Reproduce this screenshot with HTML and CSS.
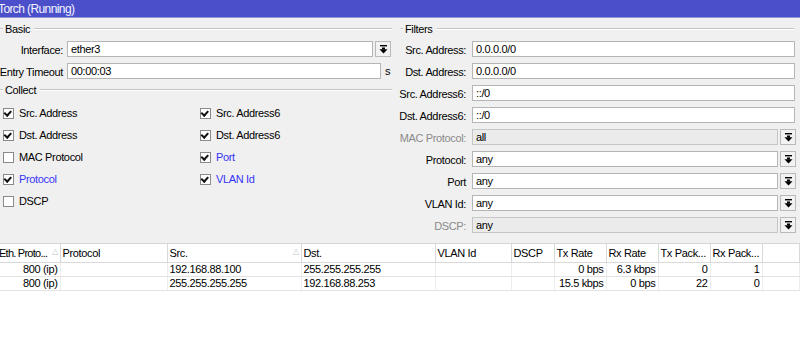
FILE: index.html
```html
<!DOCTYPE html>
<html lang="en">
<head>
  <meta charset="UTF-8" />
  <title>Torch (Running)</title>
  <link rel="stylesheet" href="styles.css">
</head>
<body>
  <div class="window">
    <div class="titlebar">Torch (Running)</div>

    <div class="panels">
      <!-- Left: Basic + Collect -->
      <div class="panel panel-left">
        <div class="group-title"><span class="dash"></span><span class="group-name">Basic</span><span class="rule"></span></div>

        <div class="field">
          <label class="field-label">Interface:</label>
          <div class="input input-drop">ether3</div>
          <button class="drop-btn"><svg width="9" height="9" viewBox="0 0 9 9"><rect x="1" y="0" width="7" height="1.4" fill="#000"/><rect x="3" y="2.5" width="3" height="2" fill="#000"/><polygon points="0.5,4.2 8.5,4.2 4.5,8.4" fill="#000"/></svg></button>
        </div>
        <div class="field field-last">
          <label class="field-label">Entry Timeout</label>
          <div class="input input-timeout">00:00:03</div>
          <span class="unit">s</span>
        </div>

        <div class="group-title"><span class="dash"></span><span class="group-name">Collect</span><span class="rule"></span></div>

        <div class="checks">
          <label class="check"><span class="box checked"></span>Src. Address</label>
          <label class="check"><span class="box checked"></span>Src. Address6</label>
          <label class="check"><span class="box checked"></span>Dst. Address</label>
          <label class="check"><span class="box checked"></span>Dst. Address6</label>
          <label class="check"><span class="box"></span>MAC Protocol</label>
          <label class="check link"><span class="box checked"></span>Port</label>
          <label class="check link"><span class="box checked"></span>Protocol</label>
          <label class="check link"><span class="box checked"></span>VLAN Id</label>
          <label class="check"><span class="box"></span>DSCP</label>
        </div>
      </div>

      <!-- Right: Filters -->
      <div class="panel panel-right">
        <div class="group-title"><span class="dash"></span><span class="group-name">Filters</span><span class="rule"></span></div>

        <div class="field">
          <label class="field-label">Src. Address:</label>
          <div class="input input-full">0.0.0.0/0</div>
        </div>
        <div class="field">
          <label class="field-label">Dst. Address:</label>
          <div class="input input-full">0.0.0.0/0</div>
        </div>
        <div class="field">
          <label class="field-label">Src. Address6:</label>
          <div class="input input-full">::/0</div>
        </div>
        <div class="field">
          <label class="field-label">Dst. Address6:</label>
          <div class="input input-full">::/0</div>
        </div>
        <div class="field disabled">
          <label class="field-label">MAC Protocol:</label>
          <div class="input input-drop">all</div>
          <button class="drop-btn"><svg width="9" height="9" viewBox="0 0 9 9"><rect x="1" y="0" width="7" height="1.4" fill="#000"/><rect x="3" y="2.5" width="3" height="2" fill="#000"/><polygon points="0.5,4.2 8.5,4.2 4.5,8.4" fill="#000"/></svg></button>
        </div>
        <div class="field">
          <label class="field-label">Protocol:</label>
          <div class="input input-drop">any</div>
          <button class="drop-btn"><svg width="9" height="9" viewBox="0 0 9 9"><rect x="1" y="0" width="7" height="1.4" fill="#000"/><rect x="3" y="2.5" width="3" height="2" fill="#000"/><polygon points="0.5,4.2 8.5,4.2 4.5,8.4" fill="#000"/></svg></button>
        </div>
        <div class="field">
          <label class="field-label">Port</label>
          <div class="input input-drop">any</div>
          <button class="drop-btn"><svg width="9" height="9" viewBox="0 0 9 9"><rect x="1" y="0" width="7" height="1.4" fill="#000"/><rect x="3" y="2.5" width="3" height="2" fill="#000"/><polygon points="0.5,4.2 8.5,4.2 4.5,8.4" fill="#000"/></svg></button>
        </div>
        <div class="field">
          <label class="field-label">VLAN Id:</label>
          <div class="input input-drop">any</div>
          <button class="drop-btn"><svg width="9" height="9" viewBox="0 0 9 9"><rect x="1" y="0" width="7" height="1.4" fill="#000"/><rect x="3" y="2.5" width="3" height="2" fill="#000"/><polygon points="0.5,4.2 8.5,4.2 4.5,8.4" fill="#000"/></svg></button>
        </div>
        <div class="field disabled">
          <label class="field-label">DSCP:</label>
          <div class="input input-drop">any</div>
          <button class="drop-btn"><svg width="9" height="9" viewBox="0 0 9 9"><rect x="1" y="0" width="7" height="1.4" fill="#000"/><rect x="3" y="2.5" width="3" height="2" fill="#000"/><polygon points="0.5,4.2 8.5,4.2 4.5,8.4" fill="#000"/></svg></button>
        </div>
      </div>
    </div>

    <!-- Traffic table -->
    <div class="table-wrap">
      <table class="grid">
        <colgroup>
          <col style="width:63px"><col style="width:107px"><col style="width:134px"><col style="width:134px">
          <col style="width:76px"><col style="width:43px"><col style="width:52px"><col style="width:52px">
          <col style="width:52px"><col style="width:52px"><col>
        </colgroup>
        <thead>
          <tr>
            <th class="sorted tight">Eth. Proto...<span class="sort">&#9651;</span></th>
            <th>Protocol</th>
            <th class="sorted">Src.<span class="sort">&#9651;</span></th>
            <th>Dst.</th>
            <th>VLAN Id</th>
            <th>DSCP</th>
            <th>Tx Rate</th>
            <th>Rx Rate</th>
            <th>Tx Pack...</th>
            <th>Rx Pack...</th>
            <th></th>
          </tr>
        </thead>
        <tbody>
          <tr>
            <td class="num">800 (ip)</td><td></td><td>192.168.88.100</td><td>255.255.255.255</td>
            <td></td><td></td><td class="num">0 bps</td><td class="num">6.3 kbps</td><td class="num">0</td><td class="num">1</td><td></td>
          </tr>
          <tr>
            <td class="num">800 (ip)</td><td></td><td>255.255.255.255</td><td>192.168.88.253</td>
            <td></td><td></td><td class="num">15.5 kbps</td><td class="num">0 bps</td><td class="num">22</td><td class="num">0</td><td></td>
          </tr>
        </tbody>
      </table>
    </div>
  </div>
</body>
</html>
```

FILE: styles.css
```css
body {
  margin: 0;
  background: #ffffff;
  font-family: 'Liberation Sans', Arial, sans-serif;
  font-size: 11px;
  letter-spacing: -0.35px;
  color: #000;
  overflow: hidden;
}

.window {
  margin-left: -3px;
  width: 803px;
  height: 364px;
  background: #ffffff;
}

.titlebar {
  height: 17px;
  line-height: 18px;
  padding-left: 1px;
  background: #4b4fca;
  border-bottom: 1px solid #9396de;
  color: #f4f4ff;
  font-size: 12px;
  letter-spacing: -0.6px;
}

.panels {
  display: grid;
  grid-template-columns: 400px 403px;
  height: 225px;
  background: #f0f0f0;
}

.panel {
  padding-top: 4px;
}

/* group titles: - Basic ------ */
.group-title {
  display: flex;
  align-items: center;
  height: 14px;
  margin-bottom: 5px;
}

.group-title .dash {
  width: 3px;
  margin-left: 3px;
  border-top: 1px solid #c4c4c4;
  border-bottom: 1px solid #ffffff;
}

.group-title .group-name {
  padding: 0 4px 0 2px;
}

.group-title .rule {
  flex: 1;
  border-top: 1px solid #c4c4c4;
  border-bottom: 1px solid #ffffff;
}

.panel-left .group-title .rule {
  margin-right: 5px;
}

.panel-right .group-title .rule {
  margin-right: 6px;
}

.field {
  display: flex;
  align-items: center;
  height: 16px;
  margin-bottom: 6px;
}

.field.field-last {
  margin-bottom: 4px;
}

.field-label {
  flex: none;
  text-align: right;
  white-space: nowrap;
  padding-top: 1px;
}

.panel-left .field-label {
  width: 66px;
  margin-right: 4px;
}

.panel-right .field-label {
  width: 69px;
  margin-right: 6px;
}

.input {
  box-sizing: border-box;
  height: 16px;
  line-height: 15px;
  padding-left: 3px;
  background: #ffffff;
  border: 1px solid #b5b5b5;
  white-space: nowrap;
}

.panel-left .input-drop {
  width: 306px;
}

.input-timeout {
  width: 314px;
}

.unit {
  margin-left: 4px;
}

.input-full {
  width: 323px;
}

.panel-right .input-drop {
  width: 306px;
}

.drop-btn {
  box-sizing: border-box;
  width: 16px;
  height: 16px;
  margin-left: 2px;
  padding: 0;
  display: flex;
  align-items: center;
  justify-content: center;
  background: #f2f2f2;
  border: 1px solid #b9b9b9;
}

.drop-btn svg {
  display: block;
}

.field.disabled .field-label {
  color: #8a8a8a;
}

.field.disabled .input {
  background: #ebebeb;
  border-color: #c6c6c6;
}

/* collect checkboxes */
.checks {
  display: grid;
  grid-template-columns: 197px 1fr;
  grid-auto-rows: 22px;
  padding-left: 6px;
}

.check {
  display: flex;
  align-items: center;
  white-space: nowrap;
}

.check.link {
  color: #3535f5;
}

.box {
  box-sizing: border-box;
  width: 11px;
  height: 11px;
  margin-right: 5px;
  background: #ffffff;
  border: 1px solid #8a8a8a;
  position: relative;
}

.box.checked::after {
  content: "";
  position: absolute;
  left: 2px;
  top: 1px;
  width: 5px;
  height: 3px;
  border-left: 2px solid #111;
  border-bottom: 2px solid #111;
  transform: rotate(-48deg);
  transform-origin: 40% 90%;
}

/* traffic table */
.table-wrap {
  background: #ffffff;
  border-top: 1px solid #d6d6d6;
}

.grid {
  border-collapse: collapse;
  table-layout: fixed;
  width: 803px;
}

.grid th {
  height: 18px;
  padding: 0 2px;
  font-weight: normal;
  text-align: left;
  white-space: nowrap;
  overflow: hidden;
  border-right: 1px solid #d9d9d9;
  border-bottom: 1px solid #d9d9d9;
}

.grid th.sorted {
  position: relative;
}

.grid th.tight {
  letter-spacing: -0.75px;
}

.sort {
  position: absolute;
  right: 2px;
  top: 3px;
  color: #c8c8c8;
  font-size: 8px;
  letter-spacing: 0;
}

.grid td {
  height: 13px;
  padding: 0 2px;
  line-height: 13px;
  white-space: nowrap;
  overflow: hidden;
  border-right: 1px solid #ededed;
  border-bottom: 1px solid #e3e3e3;
}

.grid td.num {
  text-align: right;
}
```
